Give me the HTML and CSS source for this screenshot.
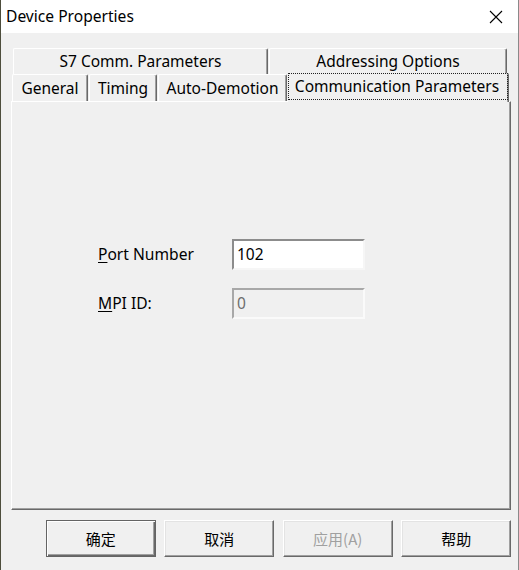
FILE: index.html
```html
<!DOCTYPE html>
<html>
<head>
<meta charset="utf-8">
<link rel="stylesheet" href="styles.css">
</head>
<body>
<div class="window">
  <div class="titlebar">
    <span class="title">Device Properties</span>
    <span class="close">
      <svg width="14" height="14" viewBox="0 0 14 14"><path d="M1 1 L13 13 M13 1 L1 13" stroke="#000" stroke-width="1.1" fill="none"/></svg>
    </span>
  </div>
  <div class="dialog">
    <div class="tabrow row1">
      <div class="tab t-s7">S7 Comm. Parameters</div>
      <div class="tab t-addr">Addressing Options</div>
    </div>
    <div class="tabrow row2">
      <div class="tab t-gen">General</div>
      <div class="tab t-tim">Timing</div>
      <div class="tab t-auto">Auto-Demotion</div>
      <div class="tab t-comm selected"><span class="focus">Communication Parameters</span></div>
    </div>
    <div class="panel">
      <div class="form">
        <label class="lbl"><u>P</u>ort Number</label>
        <div class="field">102</div>
        <label class="lbl"><u>M</u>PI ID:</label>
        <div class="field disabled">0</div>
      </div>
    </div>
    <div class="buttons">
      <div class="btn default">确定</div>
      <div class="btn">取消</div>
      <div class="btn disabled">应用(<u>A</u>)</div>
      <div class="btn">帮助</div>
    </div>
  </div>
</div>
</body>
</html>
```

FILE: styles.css
```css
html, body {
  margin: 0;
  padding: 0;
}
body {
  width: 519px;
  height: 570px;
  overflow: hidden;
  background: #f0f0f0;
  font-family: "Noto Sans", "Noto Sans CJK SC", sans-serif;
  font-size: 15px;
  color: #000;
}
.window {
  width: 519px;
  height: 570px;
  box-sizing: border-box;
  border-left: 1px solid #4d4d3c;
  border-right: 1px solid #8a8a8a;
  display: flex;
  flex-direction: column;
}
.titlebar {
  height: 33px;
  background: #fff;
  display: flex;
  align-items: center;
  justify-content: space-between;
  padding: 0 15px 0 5px;
  flex: none;
}
.title {
  font-size: 15.6px;
  line-height: 33px;
  padding-bottom: 1px;
}
.close {
  display: flex;
  width: 14px;
  height: 14px;
  margin-top: 1px;
}
.dialog {
  flex: 1;
  padding: 15px 7px 0 10px;
  display: flex;
  flex-direction: column;
}
.tabrow {
  display: flex;
  position: relative;
}
.row1 {
  height: 26px;
  margin-left: 2px;
}
.row2 {
  height: 27px;
  margin-left: 1px;
  z-index: 2;
}
.tab {
  box-sizing: border-box;
  height: 100%;
  background: #f0f0f0;
  border-top: 1px solid #fff;
  border-left: 1px solid #fff;
  border-right: 1px solid #696969;
  box-shadow: inset -1px 0 #a0a0a0;
  border-top-left-radius: 2px;
  border-top-right-radius: 2px;
  display: flex;
  align-items: center;
  justify-content: center;
  white-space: nowrap;
  font-size: 15.5px;
  padding-bottom: 1px;
}
.t-s7 { width: 255px; }
.t-addr { width: 238px; margin-left: 1px; }
.t-gen { width: 76px; }
.t-tim { width: 68px; margin-left: 1px; }
.t-auto { width: 129px; margin-left: 1px; }
.t-comm {
  width: 221px;
  margin-left: 1px;
}
.tab.selected {
  height: 29px;
  margin-top: -1px;
  border-top: none;
  border-left: none;
  align-items: flex-start;
  padding: 0;
}
.focus {
  box-sizing: border-box;
  width: 100%;
  height: 27px;
  border: 1px dotted #202020;
  display: flex;
  align-items: center;
  justify-content: center;
  padding-bottom: 2px;
  padding-right: 2px;
}
.panel {
  box-sizing: border-box;
  width: 500px;
  height: 409px;
  border-top: 1px solid #fff;
  border-left: 1px solid #fff;
  border-right: 1px solid #696969;
  border-bottom: 1px solid #696969;
  box-shadow: inset -1px -1px #a0a0a0;
  position: relative;
  z-index: 1;
  padding: 137px 0 0 86px;
}
.form {
  display: grid;
  grid-template-columns: 134px 133px;
  grid-auto-rows: 31px;
  row-gap: 18px;
  align-items: center;
}
.lbl {
  font-size: 15.6px;
  padding-bottom: 1px;
}
.lbl u {
  text-underline-offset: 2px;
}
.field {
  box-sizing: border-box;
  height: 31px;
  background: #fff;
  border-top: 2px solid #8c8c8c;
  border-left: 2px solid #8c8c8c;
  border-right: 2px solid #f6f6f6;
  border-bottom: 2px solid #f6f6f6;
  font-size: 15.5px;
  line-height: 26px;
  padding-left: 3px;
}
.field.disabled {
  background: #f0f0f0;
  color: #6d6d6d;
  border-top-color: #a8a8a8;
  border-left-color: #a8a8a8;
  border-right-color: #fafafa;
  border-bottom-color: #fafafa;
}
.buttons {
  display: flex;
  gap: 8.7px;
  margin-top: 10px;
  padding-left: 35px;
}
.btn {
  box-sizing: border-box;
  width: 110px;
  height: 37px;
  border-top: 1px solid #fff;
  border-left: 1px solid #fff;
  border-right: 1px solid #696969;
  border-bottom: 1px solid #696969;
  box-shadow: inset -1px -1px #a0a0a0, inset 1px 1px #e3e3e3;
  display: flex;
  align-items: center;
  justify-content: center;
  font-family: "Noto Sans CJK SC", sans-serif;
  font-size: 15px;
  padding-bottom: 1px;
}
.btn.default {
  border: 1px solid #646464;
  box-shadow: inset 1px 1px #fff, inset -1px -1px #696969, inset -2px -2px #a0a0a0;
}
.btn.disabled {
  color: #a0a0a0;
}
.btn.disabled u {
  text-decoration: none;
}
```
